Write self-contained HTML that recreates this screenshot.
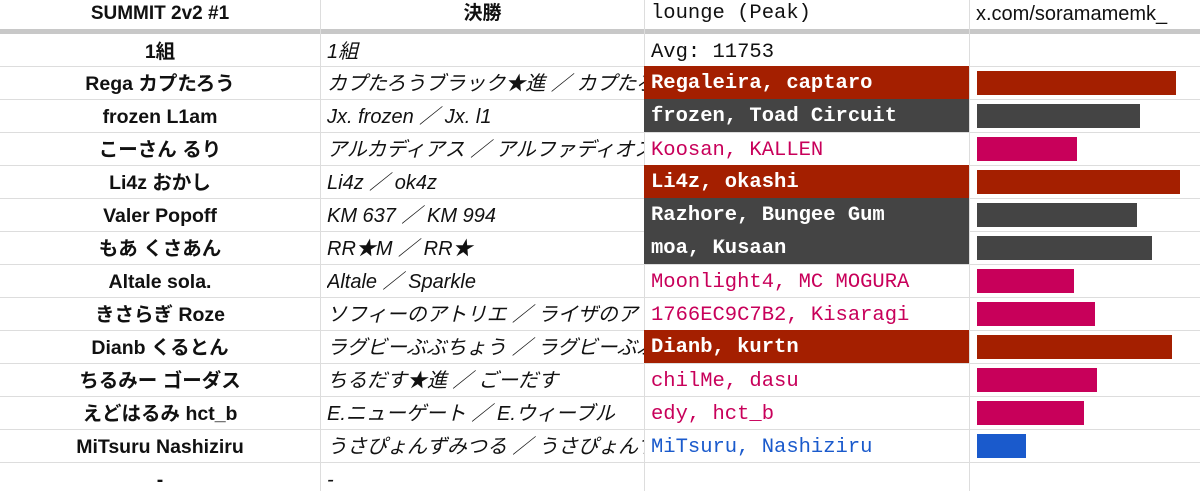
<!DOCTYPE html>
<html><head><meta charset="utf-8"><style>
*{margin:0;padding:0;box-sizing:border-box}
body{width:1200px;height:491px;background:#fff;position:relative;overflow:hidden;font-family:"Liberation Sans","Noto Sans CJK JP",sans-serif;color:#111}
.h{position:absolute;top:0;height:28px;line-height:28px;font-size:19px}
.sep{position:absolute;left:0;top:29px;width:1200px;height:5px;background:#c8c8c8}
.vl{position:absolute;top:0;height:491px;width:1px;background:#ddd}
.hl{position:absolute;left:0;width:1200px;height:1px;background:#ddd}
.c1,.c2,.c3{position:absolute;height:33px;line-height:35px;white-space:nowrap;overflow:hidden;font-size:19.5px}
.c1{left:0;width:320px;text-align:center;font-weight:bold}
.c2{left:327px;width:317px;font-style:italic;font-size:20px}
.c3{left:644px;width:325px;padding-left:7px;font-family:"Liberation Mono","Noto Sans CJK JP",monospace;font-size:20.5px}
.r{background:#a41f00;color:#fff;font-weight:bold}
.d{background:#444;color:#fff;font-weight:bold}
.p{color:#c8005a}
.b{color:#1a5acc}
.bar{position:absolute;left:977px;height:24px}
</style></head><body>
<div class="h" style="left:0;width:320px;text-align:center;font-weight:bold">SUMMIT 2v2 #1</div>
<div class="h" style="left:320px;width:325px;text-align:center;font-weight:bold">決勝</div>
<div class="h" style="left:651px;font-family:'Liberation Mono',monospace;font-size:20.5px">lounge (Peak)</div>
<div class="h" style="left:976px;font-size:20px">x.com/soramamemk_</div>
<div class="sep"></div>
<div class="vl" style="left:320px"></div>
<div class="vl" style="left:644px"></div>
<div class="vl" style="left:969px"></div>
<div class="hl" style="top:66px"></div><div class="hl" style="top:99px"></div><div class="hl" style="top:132px"></div><div class="hl" style="top:165px"></div><div class="hl" style="top:198px"></div><div class="hl" style="top:231px"></div><div class="hl" style="top:264px"></div><div class="hl" style="top:297px"></div><div class="hl" style="top:330px"></div><div class="hl" style="top:363px"></div><div class="hl" style="top:396px"></div><div class="hl" style="top:429px"></div><div class="hl" style="top:462px"></div>

<div class="c1" style="top:35px">1組</div><div class="c2" style="top:35px">1組</div><div class="c3" style="top:35px">Avg: 11753</div>

<div class="c1" style="top:67px">Rega カプたろう</div><div class="c2" style="top:67px">カプたろうブラック★進 ／ カプたろう</div><div class="c3 r" style="top:66px">Regaleira, captaro</div><div class="bar" style="top:71px;width:199px;background:#a41f00"></div>

<div class="c1" style="top:100px">frozen L1am</div><div class="c2" style="top:100px">Jx. frozen ／ Jx. l1</div><div class="c3 d" style="top:99px">frozen, Toad Circuit</div><div class="bar" style="top:104px;width:163px;background:#444"></div>

<div class="c1" style="top:133px">こーさん るり</div><div class="c2" style="top:133px">アルカディアス ／ アルファディオス</div><div class="c3 p" style="top:133px">Koosan, KALLEN</div><div class="bar" style="top:137px;width:100px;background:#c8005a"></div>

<div class="c1" style="top:166px">Li4z おかし</div><div class="c2" style="top:166px">Li4z ／ ok4z</div><div class="c3 r" style="top:165px">Li4z, okashi</div><div class="bar" style="top:170px;width:203px;background:#a41f00"></div>

<div class="c1" style="top:199px">Valer Popoff</div><div class="c2" style="top:199px">KM 637 ／ KM 994</div><div class="c3 d" style="top:198px">Razhore, Bungee Gum</div><div class="bar" style="top:203px;width:160px;background:#444"></div>

<div class="c1" style="top:232px">もあ くさあん</div><div class="c2" style="top:232px">RR★M ／ RR★</div><div class="c3 d" style="top:231px">moa, Kusaan</div><div class="bar" style="top:236px;width:175px;background:#444"></div>

<div class="c1" style="top:265px">Altale sola.</div><div class="c2" style="top:265px">Altale ／ Sparkle</div><div class="c3 p" style="top:265px">Moonlight4, MC MOGURA</div><div class="bar" style="top:269px;width:97px;background:#c8005a"></div>

<div class="c1" style="top:298px">きさらぎ Roze</div><div class="c2" style="top:298px">ソフィーのアトリエ ／ ライザのアトリエ</div><div class="c3 p" style="top:298px">1766EC9C7B2, Kisaragi</div><div class="bar" style="top:302px;width:118px;background:#c8005a"></div>

<div class="c1" style="top:331px">Dianb くるとん</div><div class="c2" style="top:331px">ラグビーぶぶちょう ／ ラグビーぶぶ</div><div class="c3 r" style="top:330px">Dianb, kurtn</div><div class="bar" style="top:335px;width:195px;background:#a41f00"></div>

<div class="c1" style="top:364px">ちるみー ゴーダス</div><div class="c2" style="top:364px">ちるだす★進 ／ ごーだす</div><div class="c3 p" style="top:364px">chilMe, dasu</div><div class="bar" style="top:368px;width:120px;background:#c8005a"></div>

<div class="c1" style="top:397px">えどはるみ hct_b</div><div class="c2" style="top:397px">E.ニューゲート ／ E.ウィーブル</div><div class="c3 p" style="top:397px">edy, hct_b</div><div class="bar" style="top:401px;width:107px;background:#c8005a"></div>

<div class="c1" style="top:430px">MiTsuru Nashiziru</div><div class="c2" style="top:430px">うさぴょんずみつる ／ うさぴょんず</div><div class="c3 b" style="top:430px">MiTsuru, Nashiziru</div><div class="bar" style="top:434px;width:49px;background:#1a5acc"></div>

<div class="c1" style="top:463px">-</div><div class="c2" style="top:463px">-</div>
</body></html>
